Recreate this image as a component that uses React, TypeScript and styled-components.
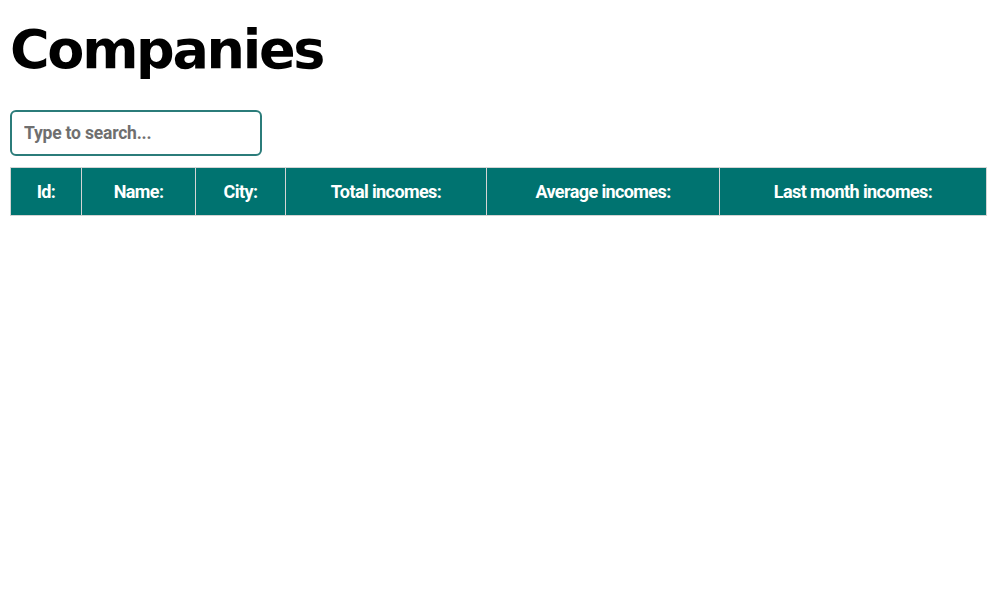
import React from "react";
import styled, { createGlobalStyle } from "styled-components";

const Global = createGlobalStyle`
  html, body { margin: 0; padding: 0; background: #fff; }
  body { font-family: Roboto, "Liberation Sans", sans-serif; }
`;

const Page = styled.div`
  display: flex;
  flex-direction: column;
  padding: 0 13px 0 10px;
`;

const Title = styled.h1`
  margin: 16px 0 0;
  font-family: "DejaVu Sans", "Liberation Sans", sans-serif;
  font-weight: 700;
  font-size: 54px;
  line-height: 68px;
  letter-spacing: -2.3px;
  color: #000;
`;

const Search = styled.input`
  margin-top: 26px;
  width: 252px;
  height: 46px;
  box-sizing: border-box;
  border: 2px solid #2b7c7a;
  border-radius: 6px;
  padding: 0 12px;
  font-family: Roboto, "Liberation Sans", sans-serif;
  font-weight: 700;
  font-size: 17.5px;
  letter-spacing: -0.2px;
  outline: none;
  &::placeholder { color: #6f6f6f; }
`;

const Table = styled.table`
  margin-top: 11px;
  width: 977px;
  border-collapse: collapse;
  table-layout: fixed;
`;

const Th = styled.th<{ $w: number }>`
  width: ${(p) => p.$w}px;
  height: 48px;
  box-sizing: border-box;
  padding: 0;
  background: #007370;
  color: #fff;
  border: 1px solid #d4d4d4;
  font-family: Roboto, "Liberation Sans", sans-serif;
  font-weight: 700;
  font-size: 18px;
  letter-spacing: -0.6px;
  text-align: center;
`;

const cols: [string, number][] = [
  ["Id:", 71],
  ["Name:", 114],
  ["City:", 90],
  ["Total incomes:", 201],
  ["Average incomes:", 233],
  ["Last month incomes:", 267],
];

export default function App() {
  return (
    <Page>
      <Global />
      <Title>Companies</Title>
      <Search placeholder="Type to search..." />
      <Table>
        <thead>
          <tr>
            {cols.map(([label, w]) => (
              <Th key={label} $w={w}>
                {label}
              </Th>
            ))}
          </tr>
        </thead>
        <tbody />
      </Table>
    </Page>
  );
}
